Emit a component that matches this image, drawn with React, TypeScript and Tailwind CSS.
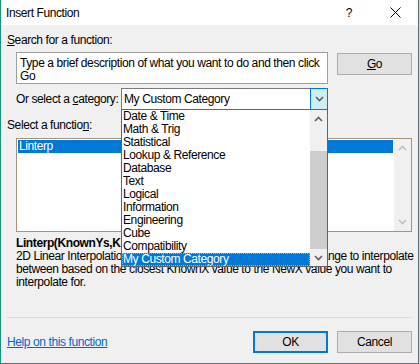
import { ReactNode } from "react";

const categories = [
  "Date & Time",
  "Math & Trig",
  "Statistical",
  "Lookup & Reference",
  "Database",
  "Text",
  "Logical",
  "Information",
  "Engineering",
  "Cube",
  "Compatibility",
  "My Custom Category",
];

function Chevron({ up, color }: { up?: boolean; color: string }) {
  return (
    <svg width="9" height="6" viewBox="0 0 9 6" aria-hidden="true">
      <polyline
        points={up ? "1,5 4.5,1.5 8,5" : "1,1 4.5,4.5 8,1"}
        fill="none"
        stroke={color}
        strokeWidth="1.6"
      />
    </svg>
  );
}

function Btn({ children, primary }: { children: ReactNode; primary?: boolean }) {
  return (
    <button
      type="button"
      className={
        primary
          ? "flex h-[22px] w-[75px] items-center justify-center border-2 border-[#0078d7] bg-[#e1e1e1] leading-none"
          : "flex h-[22px] w-[75px] items-center justify-center border border-[#adadad] bg-[#e1e1e1] leading-none"
      }
    >
      {children}
    </button>
  );
}

export default function App() {
  return (
    <div className="flex h-[364px] w-[419px] flex-col overflow-hidden border-x border-b border-[#1a9380] bg-[#f0f0f0] font-['Liberation_Sans',sans-serif] text-[12px] tracking-[-0.4px] text-black">
      <div className="flex h-[25px] shrink-0 items-center bg-white pl-[5px]">
        <span>Insert Function</span>
        <span className="ml-auto">?</span>
        <svg className="ml-[38px] mr-[17px]" width="11" height="11" viewBox="0 0 11 11" aria-hidden="true">
          <path d="M0.5 0.5 L10.5 10.5 M10.5 0.5 L0.5 10.5" stroke="#000" strokeWidth="1" />
        </svg>
      </div>

      <div className="flex flex-1 flex-col px-[6px]">
        <div className="mt-[7px] h-[16px] leading-[16px]">
          <span className="underline">S</span>earch for a function:
        </div>

        <div className="mt-[4px] flex items-start">
          <div className="ml-[9px] h-[32px] w-[312px] overflow-hidden whitespace-nowrap border border-[#a0a0a0] bg-white px-[3px] pt-[4px] leading-[13px]">
            <div>Type a brief description of what you want to do and then click</div>
            <div>Go</div>
          </div>
          <div className="ml-[9px] mt-[1px]">
            <Btn>
              <span className="underline">G</span>o
            </Btn>
          </div>
        </div>

        <div className="mt-[4px] flex items-center pl-[9px]">
          <div className="w-[105px] whitespace-nowrap">
            Or select a <span className="underline">c</span>ategory:
          </div>
          <div className="relative flex h-[22px] w-[207px] border border-[#7a7a7a] bg-white">
            <div className="flex-1 pl-[2px] leading-[20px]">My Custom Category</div>
            <div className="-my-px -mr-px flex w-[18px] items-center justify-center border border-[#0078d7] bg-[#cdeef2]">
              <Chevron color="#606060" />
            </div>

            <div className="absolute left-[-1px] top-[20px] z-10 flex h-[158px] w-[207px] border border-[#646464] bg-white">
              <div className="flex-1">
                {categories.map((c) => (
                  <div
                    key={c}
                    className={
                      c === "My Custom Category"
                        ? "h-[13px] whitespace-nowrap bg-[#0078d7] pl-[1px] leading-[13px] text-white outline-1 -outline-offset-1 outline-dotted outline-[#e8a04c]"
                        : "h-[13px] whitespace-nowrap pl-[1px] leading-[13px]"
                    }
                  >
                    {c}
                  </div>
                ))}
              </div>
              <div className="flex w-[17px] flex-col items-center bg-[#f0f0f0]">
                <div className="flex h-[17px] items-center justify-center">
                  <Chevron up color="#606060" />
                </div>
                <div className="mt-[24px] h-[98px] w-[17px] bg-[#cdcdcd]" />
                <div className="mt-auto flex h-[17px] items-center justify-center">
                  <Chevron color="#606060" />
                </div>
              </div>
            </div>
          </div>
        </div>

        <div className="mt-[7px] h-[16px] leading-[16px]">
          Select a functio<span className="underline">n</span>:
        </div>

        <div className="ml-[9px] mt-[5px] flex h-[94px] w-[396px] shrink-0 border border-[#a8927c] bg-white">
          <div className="flex-1 p-[1px]">
            <div className="h-[13px] bg-[#0078d7] pl-[1px] leading-[13px] text-white">Linterp</div>
          </div>
          <div className="flex w-[17px] flex-col items-center justify-between bg-[#f0f0f0] py-[6px]">
            <Chevron up color="#c0c0c0" />
            <Chevron color="#c0c0c0" />
          </div>
        </div>

        <div className="ml-[9px] mt-[5px] whitespace-nowrap leading-[13px]">
          <div className="font-bold">Linterp(KnownYs,KnownXs,NewX)</div>
          <div>2D Linear Interpolation. Uses the KnownYs &amp; KnownXs data range to interpolate</div>
          <div>between based on the closest KnownX value to the NewX value you want to</div>
          <div>interpolate for.</div>
        </div>

        <div className="mt-[28px] border-t border-[#dadada]" />

        <div className="mt-[13px] flex items-center">
          <span className="text-[#0066cc] underline">Help on this function</span>
          <div className="ml-auto flex gap-[9px]">
            <Btn primary>OK</Btn>
            <Btn>Cancel</Btn>
          </div>
        </div>
      </div>
    </div>
  );
}
